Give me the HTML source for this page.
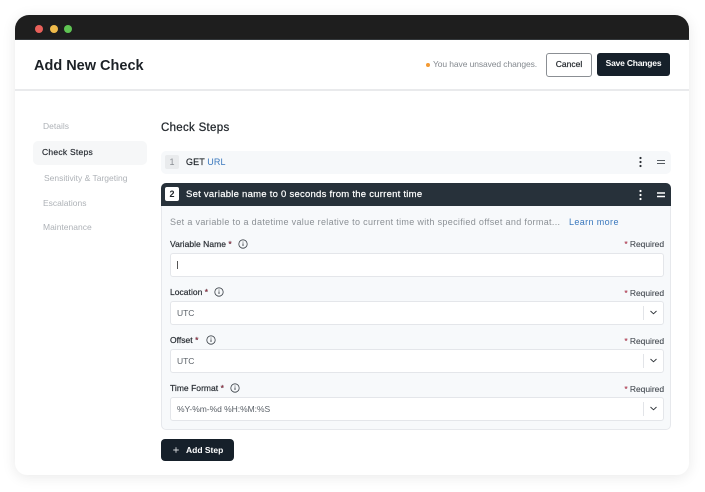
<!DOCTYPE html>
<html><head><meta charset="utf-8"><style>
html,body{margin:0;padding:0;background:#fff}
body{width:705px;height:492px;position:relative;overflow:hidden;font-family:"Liberation Sans",sans-serif;color:#20262c;filter:blur(.2px)}
.a{position:absolute;white-space:nowrap}
.win{left:15px;top:15px;width:674px;height:460px;background:#fff;border-radius:14px 14px 12px 12px;box-shadow:0 2px 14px rgba(0,0,0,.09);overflow:hidden}
.bar{left:15px;top:15px;width:674px;height:25px;background:#1e1e1e;border-radius:14px 14px 0 0}
.dot{width:8px;height:8px;border-radius:50%;top:24.5px}
.nav{font-size:8.5px;color:#aeb2b7;letter-spacing:0}
.lab{font-size:8.5px;font-weight:400;color:#2b3036;letter-spacing:.03px;-webkit-text-stroke:.2px #2b3036}
.lab i{font-style:normal;color:#d8213f}
.req{font-size:8.5px;color:#454b52;letter-spacing:-.05px;right:41px;-webkit-text-stroke:.1px #454b52}
.req i{font-style:normal;color:#d8213f}
.inp{left:170px;width:492px;height:22px;background:#fff;border:1px solid #e4e6ea;border-radius:3px}
.val{left:177px;font-size:8.5px;color:#5b6168;letter-spacing:-.03px}
.sep{left:643px;width:1px;height:14px;background:#e2e4e8}
</style></head><body>
<div class="a win"></div>
<div class="a bar"></div>
<div class="a dot" style="left:35px;background:#e9605a"></div>
<div class="a dot" style="left:50px;background:#efba4a"></div>
<div class="a dot" style="left:64px;background:#5fc453"></div>
<div class="a" style="left:15px;top:39px;width:674px;height:1px;background:#33373a"></div>

<div class="a" style="left:34px;top:57.5px;font-size:14.5px;line-height:17px;font-weight:700;color:#1c2126;letter-spacing:0">Add New Check</div>
<div class="a" style="left:15px;top:89px;width:674px;height:2px;background:#e9eaec"></div>

<div class="a" style="left:426px;top:63px;width:4px;height:4px;border-radius:50%;background:#f39a33"></div>
<div class="a" style="left:433px;top:59px;font-size:8.5px;line-height:11px;color:#84898f;letter-spacing:-.1px">You have unsaved changes.</div>
<div class="a" style="left:546px;top:53px;width:44px;height:22px;border:1px solid #8b8f94;border-radius:3px;background:#fff;font-size:8.5px;line-height:20px;text-align:center;color:#23282d;letter-spacing:0;-webkit-text-stroke:.2px #23282d">Cancel</div>
<div class="a" style="left:597px;top:53px;width:73px;height:23px;border-radius:3px;background:#16202a;font-size:8.5px;line-height:21px;text-align:center;color:#fff;font-weight:700;letter-spacing:-.2px">Save Changes</div>

<div class="a nav" style="left:43px;top:121px;line-height:11px">Details</div>
<div class="a" style="left:33px;top:141px;width:114px;height:24px;border-radius:5px;background:#f6f7f8"></div>
<div class="a" style="left:42px;top:147px;font-size:8.5px;line-height:11px;color:#2a2f35;letter-spacing:.25px;-webkit-text-stroke:.2px #2a2f35">Check Steps</div>
<div class="a nav" style="left:44px;top:173px;line-height:11px">Sensitivity &amp; Targeting</div>
<div class="a nav" style="left:43px;top:198px;line-height:11px">Escalations</div>
<div class="a nav" style="left:43px;top:222px;line-height:11px">Maintenance</div>

<div class="a" style="left:161px;top:121px;font-size:11.5px;line-height:15px;color:#23282d;letter-spacing:.3px;-webkit-text-stroke:.25px #23282d">Check Steps</div>

<div class="a" style="left:161px;top:151px;width:510px;height:23px;border-radius:5px;background:#f6f8fa"></div>
<div class="a" style="left:165px;top:155px;width:14px;height:14px;border-radius:2px;background:#e9ebed;font-size:9px;line-height:14px;text-align:center;color:#8a8f94">1</div>
<div class="a" style="left:186px;top:156px;font-size:9px;line-height:12px;color:#1f2429;letter-spacing:.1px;-webkit-text-stroke:.2px #1f2429">GET <span style="color:#3a78bd;-webkit-text-stroke:0;font-weight:400">URL</span></div>
<svg class="a" style="left:636px;top:156px" width="30" height="12"><g fill="#2a2f35"><circle cx="4.5" cy="2" r="1.1"/><circle cx="4.5" cy="6" r="1.1"/><circle cx="4.5" cy="10" r="1.1"/></g><path d="M21 4.5h8M21 7.5h8" stroke="#555b61" stroke-width="1"/></svg>

<div class="a" style="left:161px;top:183px;width:508px;height:245px;border:1px solid #e6e8ec;border-radius:5px;background:#f7f9fb"></div>
<div class="a" style="left:161px;top:183px;width:510px;height:23px;border-radius:5px 5px 0 0;background:#27313a"></div>
<div class="a" style="left:165px;top:187px;width:14px;height:14px;border-radius:2px;background:#fff;font-size:9px;line-height:14px;text-align:center;color:#1f2429;font-weight:700">2</div>
<div class="a" style="left:186px;top:189px;font-size:9.5px;line-height:12px;color:#fff;letter-spacing:.25px;-webkit-text-stroke:.2px #fff">Set variable name to 0 seconds from the current time</div>
<svg class="a" style="left:636px;top:189px" width="30" height="12"><g fill="#fff"><circle cx="4.5" cy="2" r="1.1"/><circle cx="4.5" cy="6" r="1.1"/><circle cx="4.5" cy="10" r="1.1"/></g><path d="M21 4h8M21 7.5h8" stroke="#fff" stroke-width="1.4"/></svg>

<div class="a" style="left:170px;top:216px;font-size:9px;line-height:12px;color:#8b9095;letter-spacing:.33px">Set a variable to a datetime value relative to current time with specified offset and format...</div>
<div class="a" style="left:569px;top:216px;font-size:9px;line-height:12px;color:#3a78bd;letter-spacing:.38px">Learn more</div>

<div class="a lab" style="left:170px;top:239px;line-height:11px">Variable Name <i>*</i></div>
<div class="a req" style="top:239px;line-height:11px"><i>*</i> Required</div>
<div class="a inp" style="top:253px"></div>
<div class="a" style="left:177px;top:261px;width:1px;height:8px;background:#555"></div>
<svg class="a" style="left:238px;top:239px" width="10" height="10"><circle cx="5" cy="5" r="4.2" fill="none" stroke="#3a4047" stroke-width=".8"/><path d="M5 4.4v2.6M5 2.6v.9" stroke="#3a4047" stroke-width=".9"/></svg>

<div class="a lab" style="left:170px;top:287px;line-height:11px">Location <i>*</i></div>
<svg class="a" style="left:214px;top:287px" width="10" height="10"><circle cx="5" cy="5" r="4.2" fill="none" stroke="#3a4047" stroke-width=".8"/><path d="M5 4.4v2.6M5 2.6v.9" stroke="#3a4047" stroke-width=".9"/></svg>
<div class="a req" style="top:288px;line-height:11px"><i>*</i> Required</div>
<div class="a inp" style="top:301px"></div>
<div class="a val" style="top:308px;line-height:11px">UTC</div>
<div class="a sep" style="top:306px"></div>
<svg class="a" style="left:650px;top:309px" width="7" height="7"><path d="M.5 2 3.5 4.8 6.5 2" fill="none" stroke="#2a2f35" stroke-width=".9"/></svg>

<div class="a lab" style="left:170px;top:335px;line-height:11px">Offset <i>*</i></div>
<svg class="a" style="left:206px;top:335px" width="10" height="10"><circle cx="5" cy="5" r="4.2" fill="none" stroke="#3a4047" stroke-width=".8"/><path d="M5 4.4v2.6M5 2.6v.9" stroke="#3a4047" stroke-width=".9"/></svg>
<div class="a req" style="top:336px;line-height:11px"><i>*</i> Required</div>
<div class="a inp" style="top:349px"></div>
<div class="a val" style="top:356px;line-height:11px">UTC</div>
<div class="a sep" style="top:354px"></div>
<svg class="a" style="left:650px;top:357px" width="7" height="7"><path d="M.5 2 3.5 4.8 6.5 2" fill="none" stroke="#2a2f35" stroke-width=".9"/></svg>

<div class="a lab" style="left:170px;top:383px;line-height:11px">Time Format <i>*</i></div>
<svg class="a" style="left:230px;top:383px" width="10" height="10"><circle cx="5" cy="5" r="4.2" fill="none" stroke="#3a4047" stroke-width=".8"/><path d="M5 4.4v2.6M5 2.6v.9" stroke="#3a4047" stroke-width=".9"/></svg>
<div class="a req" style="top:384px;line-height:11px"><i>*</i> Required</div>
<div class="a inp" style="top:397px"></div>
<div class="a val" style="top:404px;line-height:11px">%Y-%m-%d %H:%M:%S</div>
<div class="a sep" style="top:402px"></div>
<svg class="a" style="left:650px;top:405px" width="7" height="7"><path d="M.5 2 3.5 4.8 6.5 2" fill="none" stroke="#2a2f35" stroke-width=".9"/></svg>

<div class="a" style="left:161px;top:439px;width:73px;height:22px;border-radius:4px;background:#16202a"></div>
<svg class="a" style="left:172px;top:446px" width="8" height="8"><path d="M4 1.2v5.6M1.2 4h5.6" stroke="#d5d8db" stroke-width=".9"/></svg>
<div class="a" style="left:186px;top:445px;font-size:8.5px;line-height:11px;color:#fff;font-weight:700;letter-spacing:0">Add Step</div>
</body></html>
